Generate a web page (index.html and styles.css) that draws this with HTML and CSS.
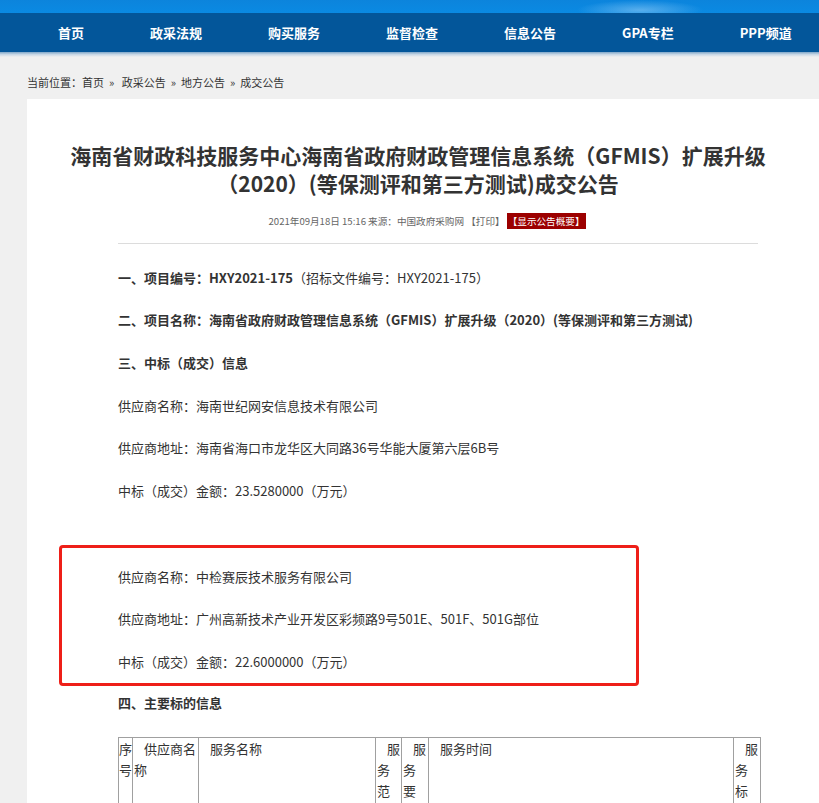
FILE: index.html
```html
<!DOCTYPE html>
<html lang="zh-CN">
<head>
  <meta charset="UTF-8">
  <title>成交公告</title>
  <link rel="stylesheet" href="styles.css">
</head>
<body>

  <div class="banner"></div>

  <div class="nav">
    <ul>
      <li><a href="#">首页</a></li>
      <li><a href="#">政采法规</a></li>
      <li><a href="#">购买服务</a></li>
      <li><a href="#">监督检查</a></li>
      <li><a href="#">信息公告</a></li>
      <li><a href="#">GPA专栏</a></li>
      <li><a href="#">PPP频道</a></li>
    </ul>
  </div>
  <div class="nav-shade"></div>

  <div class="crumbs">
    当前位置：<a href="#">首页</a><span class="sep">»</span>&nbsp;<a href="#">政采公告</a><span class="sep">»</span><a href="#">地方公告</a><span class="sep">»</span><a href="#">成交公告</a>
  </div>

  <div class="article">
    <h1 class="title">海南省财政科技服务中心海南省政府财政管理信息系统（GFMIS）扩展升级（2020）(等保测评和第三方测试)成交公告</h1>

    <div class="meta">
      2021年09月18日 15:16 来源：中国政府采购网 【打印】 <span class="summary">【显示公告概要】</span>
    </div>

    <div class="content">
      <p><b>一、项目编号：HXY2021-175</b>（招标文件编号：HXY2021-175）</p>
      <p><b>二、项目名称：海南省政府财政管理信息系统（GFMIS）扩展升级（2020）(等保测评和第三方测试)</b></p>
      <p><b>三、中标（成交）信息</b></p>
      <p>供应商名称：海南世纪网安信息技术有限公司</p>
      <p>供应商地址：海南省海口市龙华区大同路36号华能大厦第六层6B号</p>
      <p>中标（成交）金额：23.5280000（万元）</p>

      <div class="marked">
        <p>供应商名称：中检赛辰技术服务有限公司</p>
        <p>供应商地址：广州高新技术产业开发区彩频路9号501E、501F、501G部位</p>
        <p>中标（成交）金额：22.6000000（万元）</p>
      </div>

      <p><b>四、主要标的信息</b></p>

      <table class="items">
        <colgroup>
          <col style="width:14px">
          <col style="width:66px">
          <col style="width:177px">
          <col style="width:26px">
          <col style="width:27px">
          <col style="width:305px">
          <col style="width:27px">
        </colgroup>
        <tr>
          <td class="no-indent">序号</td>
          <td>供应商名称</td>
          <td>服务名称</td>
          <td>服务范围</td>
          <td>服务要求</td>
          <td>服务时间</td>
          <td>服务标准</td>
        </tr>
      </table>
    </div>
  </div>

</body>
</html>
```

FILE: styles.css
```css
body {
  margin: 0;
  background: #f0f0f0;
  font-family: "Noto Sans CJK SC", "Liberation Sans", sans-serif;
  color: #333;
  overflow-x: hidden;
}
a {
  color: inherit;
  text-decoration: none;
}
.banner {
  height: 13px;
  background:
    radial-gradient(ellipse 90px 14px at 640px 10px, rgba(140, 200, 245, 0.6), rgba(140, 200, 245, 0) 70%),
    linear-gradient(180deg, #0c84dc, #0a8ae3);
}
.nav {
  height: 39px;
  background: #03569a;
}
.nav ul {
  display: flex;
  gap: 66px;
  margin: 0;
  padding: 0 0 0 58px;
  list-style: none;
}
.nav li a {
  display: block;
  line-height: 39px;
  font-size: 13px;
  font-weight: bold;
  color: #fff;
}
.nav-shade {
  height: 5px;
  background: linear-gradient(180deg, #7fa7c9, #c9d8e6 50%, #f0f0f0);
}
.crumbs {
  padding: 17px 0 9px 27px;
  font-size: 11px;
  line-height: 16px;
  color: #333;
}
.crumbs .sep {
  margin: 0 5px;
}
.article {
  width: 800px;
  margin-left: 27px;
  padding-top: 42px;
  padding-bottom: 40px;
  background: #fff;
}
.title {
  width: 700px;
  margin: 0 0 0 41px;
  font-size: 21px;
  line-height: 28px;
  text-align: center;
  color: #333;
}
.meta {
  margin-top: 17px;
  font-size: 9.6px;
  line-height: 15px;
  text-align: center;
  color: #666;
}
.summary {
  padding: 1px 1px;
  background: #9c0000;
  color: #fff;
}
.content {
  width: 640px;
  margin-top: 14px;
  margin-left: 91px;
  border-top: 1px solid #dcdcdc;
  padding-top: 12.6px;
  font-size: 13px;
}
.content p {
  margin: 0;
  line-height: 42.7px;
}
.marked {
  width: 518px;
  margin: 32px 0 -4px -59px;
  padding: 8px 0 0 56px;
  border: 3px solid #ee1f18;
  border-radius: 4px;
}
.marked p {
  line-height: 42.5px;
}
.items {
  margin-top: 12px;
  border-collapse: collapse;
  table-layout: fixed;
  width: 642px;
}
.items td {
  border: 1px solid #a0a0a0;
  padding: 0 1px;
  vertical-align: top;
  text-indent: 10px;
  line-height: 21px;
  font-size: 13px;
  color: #333;
  word-break: break-all;
}
.items td.no-indent {
  padding: 0;
  text-indent: 0;
}
```
